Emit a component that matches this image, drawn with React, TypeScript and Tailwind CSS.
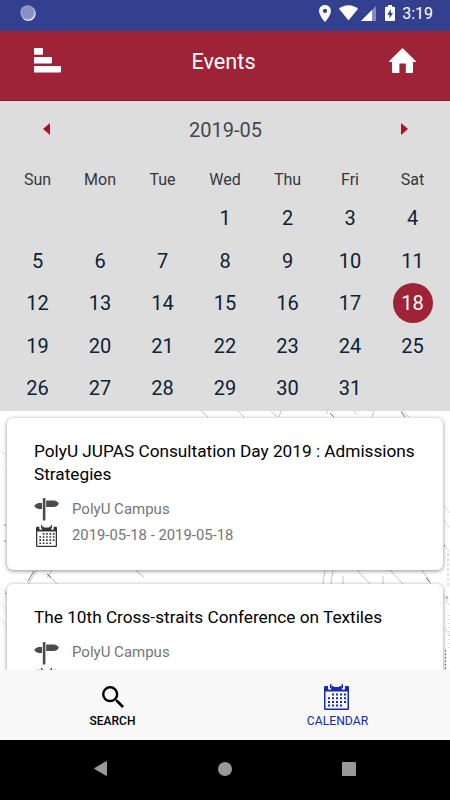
import { useState } from "react";

const WEEKDAYS = ["Sun", "Mon", "Tue", "Wed", "Thu", "Fri", "Sat"];

// May 2019 starts on a Wednesday
const FIRST_WEEKDAY = 3;
const DAYS_IN_MONTH = 31;

type CampusEvent = {
  title: string;
  place: string;
  date?: string;
};

const EVENTS: CampusEvent[] = [
  {
    title: "PolyU JUPAS Consultation Day 2019 : Admissions Strategies",
    place: "PolyU Campus",
    date: "2019-05-18 - 2019-05-18",
  },
  {
    title: "The 10th Cross-straits Conference on Textiles",
    place: "PolyU Campus",
  },
];

function CalendarIcon({ className }: { className: string }) {
  return (
    <svg viewBox="0 0 25 26" className={className} fill="currentColor">
      <path
        fillRule="evenodd"
        d="M1.2 2H4v2.500a1.200 1.200 0 0 0 1.200 1.200h.9a1.200 1.200 0 0 0 1.200-1.200V2H9.500v1h6V2h2.200v2.500a1.200 1.200 0 0 0 1.200 1.200h.9A1.200 1.200 0 0 0 21 4.500V2h2.800A1.200 1.200 0 0 1 25 3.200v21.600a1.200 1.200 0 0 1-1.200 1.200H1.200A1.200 1.200 0 0 1 0 24.800V3.200A1.200 1.200 0 0 1 1.200 2zM1.500 7.600v16.900h22V7.600z"
      />
      <path d="M6 0h1.400v4.200H6zM17.600 0H19v4.200h-1.400z" />
      <path
        d="M8 10.500h14M4 14.200h18M4 17.900h18M4 21.600h14"
        fill="none"
        stroke="currentColor"
        strokeWidth="2"
        strokeDasharray="2 2"
      />
    </svg>
  );
}

function SignpostIcon() {
  return (
    <svg viewBox="0 0 25 23" className="mt-px h-[23px] w-[25px]" fill="#4b4c50">
      <path d="M8.800 0h2.600v22.500H8.800z" />
      <path d="M8 5v6H4.400Q2 10.500 0 8q2-2.500 4.400-3zM12.200 2.600h8.400Q23.500 3.200 25 5.800q-1.500 2.600-4.400 3.200h-8.400z" />
    </svg>
  );
}

function StatusBar() {
  return (
    <div className="flex h-[31px] shrink-0 items-center bg-[#33408f] pl-5 pr-[17px] pb-[5px] text-white">
      <svg viewBox="0 0 16 16" className="h-4 w-4">
        <circle cx="8.300" cy="8.400" r="7.400" fill="#fff" />
        <circle cx="7.600" cy="7.500" r="7.300" fill="#8790c1" />
        <circle
          cx="7.600"
          cy="7.500"
          r="6.200"
          fill="none"
          stroke="#b8bddb"
          strokeWidth="1"
          strokeDasharray="1 1.200"
        />
      </svg>
      <div className="flex-1" />
      <svg viewBox="5 2 14 20" className="h-[17px] w-[12px]" fill="#fff">
        <path d="M12 2C8.130 2 5 5.130 5 9c0 5.250 7 13 7 13s7-7.750 7-13c0-3.870-3.130-7-7-7zm0 9.500a2.500 2.500 0 0 1 0-5 2.500 2.500 0 0 1 0 5z" />
      </svg>
      <svg viewBox="0 0 19 16" className="ml-2 h-4 w-[19px]" fill="#fff">
        <path d="M9.500 15.500 0 3.800C2.500 1.500 6 0.200 9.500 0.200S16.500 1.500 19 3.800z" />
      </svg>
      <svg viewBox="0 0 15 15" className="ml-[3px] mt-px h-[15px] w-[15px]" fill="#fff">
        <path d="M15 0v15H0z" opacity=".4" />
        <path d="M11 4v11H0z" />
      </svg>
      <svg viewBox="0 0 10 16" className="ml-[9px] h-4 w-[10px]">
        <path
          fill="#fff"
          d="M3 0h4v1.700h2a1 1 0 0 1 1 1V15a1 1 0 0 1-1 1H1a1 1 0 0 1-1-1V2.700a1 1 0 0 1 1-1h2z"
        />
        <path fill="#33408f" d="M5.800 4 2.200 9.700h2.200V13.500l3.600-5.600H5.800z" />
      </svg>
      <span className="ml-[7px] mt-px text-base leading-4">3:19</span>
    </div>
  );
}

function Header() {
  return (
    <header className="flex h-[70px] shrink-0 items-center justify-between border-b border-[#950d18] bg-[#9f2337] pl-[34px] pr-[34px] pb-2">
      <svg viewBox="0 0 27 25" className="mb-[2px] h-[25px] w-[27px]" fill="#fff">
        <path d="M0 0h8.200a.8.800 0 0 1 .8.800v5.200a.8.800 0 0 1-.8.800H0zM0 9h17.200a.8.800 0 0 1 .8.800v4.800a.8.800 0 0 1-.8.800H0zM0 18h26.200a.8.800 0 0 1 .8.800v5a.8.800 0 0 1-.8.800H0z" />
      </svg>
      <h1 className="-ml-[3px] text-[21.700px] leading-6 text-white">Events</h1>
      <svg viewBox="0 0 27 25" className="mb-[2px] h-[25px] w-[27px]" fill="#fff">
        <path d="M13.500 0 27 13.200V14h-3v10a1 1 0 0 1-1 1h-6.200v-9.500h-6.400V25H4a1 1 0 0 1-1-1V14H0v-.8z" />
      </svg>
    </header>
  );
}

type MonthProps = {
  selected: number;
  onSelect: (day: number) => void;
};

function Month({ selected, onSelect }: MonthProps) {
  const blanks = Array.from({ length: FIRST_WEEKDAY });
  const days = Array.from({ length: DAYS_IN_MONTH }, (_, i) => i + 1);

  return (
    <section className="h-[310px] shrink-0 bg-[#dddddd] px-[6.250px]">
      <div className="flex h-[57px] items-center justify-between pl-[37px] pr-9">
        <button aria-label="Previous month" className="mb-[2px]">
          <svg viewBox="0 0 7 12" className="h-3 w-[7px]" fill="#b1101f">
            <path d="M7 0v12L0 6z" />
          </svg>
        </button>
        <span className="text-xl text-[#43484d]">2019-05</span>
        <button aria-label="Next month" className="mb-[2px]">
          <svg viewBox="0 0 7 12" className="h-3 w-[7px]" fill="#b1101f">
            <path d="M0 0v12l7-6z" />
          </svg>
        </button>
      </div>
      <div className="grid h-[39px] grid-cols-7 items-center pt-[5px] text-center text-base text-[#33383e]">
        {WEEKDAYS.map((name) => (
          <span key={name}>{name}</span>
        ))}
      </div>
      <div className="grid auto-rows-[42.500px] grid-cols-7 place-items-center">
        {blanks.map((_, i) => (
          <span key={`blank-${i}`} />
        ))}
        {days.map((day) => (
          <button
            key={day}
            onClick={() => onSelect(day)}
            className={
              day === selected
                ? "h-10 w-10 rounded-full bg-[#9f2337] text-xl text-white"
                : "h-10 w-10 rounded-full text-xl text-[#0b2238]"
            }
          >
            {day}
          </button>
        ))}
      </div>
    </section>
  );
}

// faint street map behind the cards
function MapBackdrop() {
  return (
    <svg
      viewBox="0 0 450 259"
      className="absolute inset-0 h-full w-full"
      fill="none"
      stroke="#b5b5b5"
      strokeWidth=".8"
    >
      <path d="M201 0l7 6M238 0l6 6M271 0l6 6M281 0l-2 6M327 0v3M354 0l3 3M374 0l-2 6M401 0l8 6" />
      <path d="M325 159l-2 14M333 159l-2 14M343 165v8M357 159l13 14M383 165v8M390 159l13 14M422 159l9 14" />
      <path d="M37 159l-10 16M52 159l-5 8M48 163l9 10M136 160l8 6" />
      <path d="M444 95l6 7M444 109l6 8M444 134l6 7M444 186l5 8M445 217l5 8" strokeOpacity=".6" />
      <path d="M0 39l6 5M0 54l4 3M0 177l7 5M0 191l6 7M0 206l6 8" strokeOpacity=".4" />
      <path d="M448 142v34" strokeDasharray="3 2" />
      <path d="M449 204v34" strokeDasharray="1 3" />
      <path
        stroke="#555"
        d="M330 2l4 4M401 1l4 5M34 160l-6 10M47 163l4 4M426 167l4 4M444 134l1 1M446 185l2 3"
      />
      <path stroke="#333" d="M445.500 239v20" strokeDasharray="1.500 2" />
      <path stroke="#777" d="M4 114h2M4 130h2M5 182l1 1" />
    </svg>
  );
}

function EventCard({ event }: { event: CampusEvent }) {
  return (
    <article className="relative rounded-md bg-white px-[27px] pb-[22px] pt-[22px] shadow-[0_1px_4px_rgba(0,0,0,0.45)]">
      <h2 className="text-[17.230px] leading-[22.500px] text-black">{event.title}</h2>
      <div className="mt-[11px] flex h-[26px] items-center text-[15px] text-[#757575]">
        <span className="w-[38px]">
          <SignpostIcon />
        </span>
        {event.place}
      </div>
      <div className="flex h-[26px] items-center text-[14.850px] text-[#757575]">
        <span className="w-[38px] pl-[2px]">
          <CalendarIcon className="mt-px h-[22px] w-[21px] text-[#333438]" />
        </span>
        {event.date}
      </div>
    </article>
  );
}

function TabBar() {
  return (
    <nav className="grid h-[70px] shrink-0 grid-cols-2 bg-[#f8f8f8] text-[12.200px]">
      <button className="flex flex-col items-center pt-4 font-medium text-black">
        <svg viewBox="3 3 17.500 17.500" className="h-[22px] w-[22px]" fill="currentColor">
          <path d="M15.500 14h-.79l-.28-.27A6.471 6.471 0 0 0 16 9.500 6.500 6.500 0 1 0 9.500 16c1.610 0 3.090-.59 4.230-1.570l.27.28v.79l5 4.990L20.490 19l-4.990-5zm-6 0C7.010 14 5 11.990 5 9.500S7.010 5 9.500 5 14 7.010 14 9.500 11.990 14 9.500 14z" />
        </svg>
        <span className="mt-[4px] text-xs leading-[18px]">SEARCH</span>
      </button>
      <button className="flex flex-col items-center pt-[14px] text-[#1528b5]">
        <CalendarIcon className="-ml-[2px] h-[26px] w-[25px]" />
        <span className="mt-[2px] leading-[18px]">CALENDAR</span>
      </button>
    </nav>
  );
}

function SystemNav() {
  return (
    <div className="flex h-[60px] shrink-0 items-center justify-between bg-black pl-[94px] pr-[94px] pb-[3px] text-[#999999]">
      <svg viewBox="0 0 13 15" className="h-[15px] w-[13px]" fill="currentColor">
        <path d="M12 .3a.8.800 0 0 1 1 .8v12.800a.8.800 0 0 1-1 .8L.5 8a.7.700 0 0 1 0-1z" />
      </svg>
      <span className="h-[14px] w-[14px] rounded-full bg-[#999999]" />
      <span className="h-[14px] w-[14px] rounded-[1px] bg-[#999999]" />
    </div>
  );
}

export default function App() {
  const [selected, setSelected] = useState(18);

  return (
    <div className="flex h-[800px] w-[450px] flex-col overflow-hidden bg-white font-['Roboto',sans-serif]">
      <StatusBar />
      <Header />
      <Month selected={selected} onSelect={setSelected} />
      <main className="relative min-h-0 flex-1 overflow-hidden bg-white">
        <MapBackdrop />
        <div className="flex flex-col gap-[14px] px-[7px] pt-[7px]">
          {EVENTS.map((event) => (
            <EventCard key={event.title} event={event} />
          ))}
        </div>
      </main>
      <TabBar />
      <SystemNav />
    </div>
  );
}
